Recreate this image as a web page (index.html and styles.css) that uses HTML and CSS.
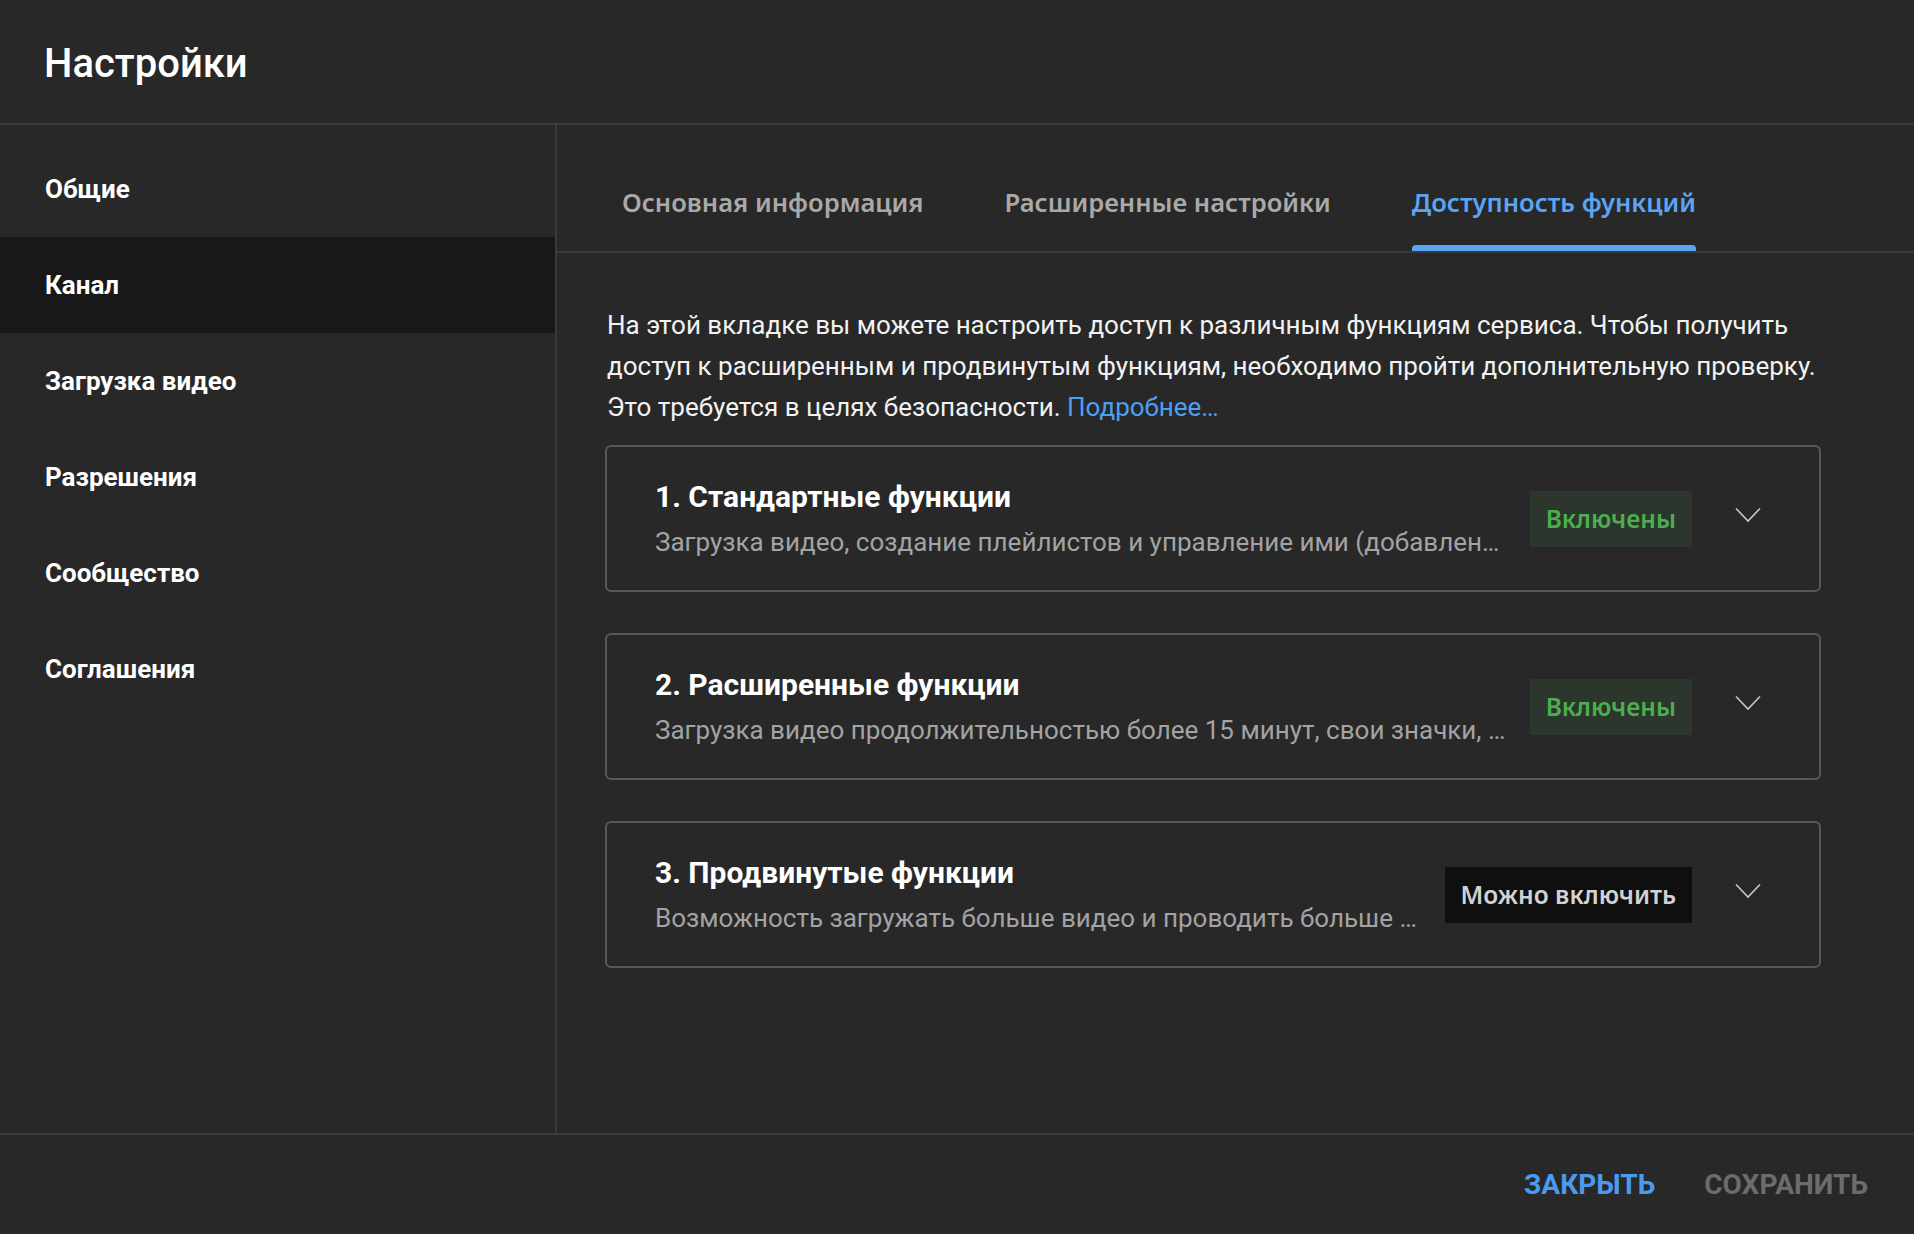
FILE: index.html
```html
<!DOCTYPE html>
<html lang="ru">
<head>
<meta charset="utf-8">
<title>Настройки</title>
<link rel="stylesheet" href="styles.css">
</head>
<body>
<div class="dialog">
  <header class="header">
    <h1 class="title">Настройки</h1>
  </header>
  <div class="main">
    <nav class="sidebar">
      <div class="nav-item">Общие</div>
      <div class="nav-item active">Канал</div>
      <div class="nav-item">Загрузка видео</div>
      <div class="nav-item">Разрешения</div>
      <div class="nav-item">Сообщество</div>
      <div class="nav-item">Соглашения</div>
    </nav>
    <section class="content">
      <div class="tabs">
        <div class="tab"><span class="tab-label">Основная информация</span><span class="tab-line"></span></div>
        <div class="tab"><span class="tab-label">Расширенные настройки</span><span class="tab-line"></span></div>
        <div class="tab selected"><span class="tab-label">Доступность функций</span><span class="tab-line"></span></div>
      </div>
      <div class="panel">
        <p class="desc">На этой вкладке вы можете настроить доступ к различным функциям сервиса. Чтобы получить<br>доступ к расширенным и продвинутым функциям, необходимо пройти дополнительную проверку.<br>Это требуется в целях безопасности. <a class="link" href="#">Подробнее…</a></p>

        <div class="card">
          <div class="card-text">
            <div class="card-title">1. Стандартные функции</div>
            <div class="card-sub">Загрузка видео, создание плейлистов и управление ими (добавлен…</div>
          </div>
          <div class="badge on">Включены</div>
          <svg class="chev" width="26" height="16" viewBox="0 0 26 16"><path d="M1 1.5 L13 14 L25 1.5" fill="none" stroke="#c8c8c8" stroke-width="1.6"/></svg>
        </div>

        <div class="card">
          <div class="card-text">
            <div class="card-title">2. Расширенные функции</div>
            <div class="card-sub">Загрузка видео продолжительностью более 15 минут, свои значки, …</div>
          </div>
          <div class="badge on">Включены</div>
          <svg class="chev" width="26" height="16" viewBox="0 0 26 16"><path d="M1 1.5 L13 14 L25 1.5" fill="none" stroke="#c8c8c8" stroke-width="1.6"/></svg>
        </div>

        <div class="card">
          <div class="card-text">
            <div class="card-title">3. Продвинутые функции</div>
            <div class="card-sub">Возможность загружать больше видео и проводить больше …</div>
          </div>
          <div class="badge off">Можно включить</div>
          <svg class="chev" width="26" height="16" viewBox="0 0 26 16"><path d="M1 1.5 L13 14 L25 1.5" fill="none" stroke="#c8c8c8" stroke-width="1.6"/></svg>
        </div>
      </div>
    </section>
  </div>
  <footer class="footer">
    <button class="btn primary">ЗАКРЫТЬ</button>
    <button class="btn muted">СОХРАНИТЬ</button>
  </footer>
</div>
</body>
</html>
```
FILE: styles.css
```css
* { box-sizing: border-box; }
html, body {
  margin: 0;
  padding: 0;
  background: #282828;
  font-family: Roboto, "Noto Sans", "Liberation Sans", sans-serif;
  color: #fff;
}
.dialog {
  width: 1914px;
  height: 1234px;
  display: flex;
  flex-direction: column;
  background: #282828;
}
.header {
  height: 125px;
  flex: none;
  border-bottom: 2px solid #3a3a3a;
  display: flex;
  align-items: center;
  padding: 4px 0 0 44px;
}
.title {
  margin: 0;
  font-size: 40px;
  font-weight: 500;
  line-height: 48px;
  color: #fff;
}
.main {
  height: 1008px;
  flex: none;
  display: flex;
}
.sidebar {
  width: 557px;
  flex: none;
  border-right: 2px solid #3a3a3a;
  padding-top: 16px;
}
.nav-item {
  height: 96px;
  display: flex;
  align-items: center;
  padding-left: 45px;
  font-size: 26px;
  font-weight: 700;
  color: #fff;
}
.nav-item.active {
  background: #181818;
}
.content {
  flex: 1;
  display: flex;
  flex-direction: column;
}
.tabs {
  height: 128px;
  flex: none;
  display: flex;
  gap: 81px;
  padding-left: 65px;
  border-bottom: 2px solid #3a3a3a;
}
.tab {
  display: flex;
  flex-direction: column;
  height: 126px;
}
.tab-label {
  padding-top: 61px;
  line-height: 34px;
  font-family: "Noto Sans", "Open Sans", sans-serif;
  font-size: 25.6px;
  font-weight: 600;
  color: #a9a9a9;
  white-space: nowrap;
}
.tab-line {
  margin-top: auto;
  height: 6px;
  border-radius: 4px 4px 0 0;
}
.tab.selected .tab-label { color: #5ba4f4; }
.tab.selected .tab-line { background: #5ba4f4; }
.panel {
  padding: 52px 93px 0 48px;
}
.desc {
  margin: 0 0 17px 2px;
  font-size: 26px;
  line-height: 41px;
  color: #f2f2f2;
  white-space: nowrap;
}
.link {
  color: #4ca0f4;
  text-decoration: none;
}
.card {
  height: 147px;
  border: 2px solid #585858;
  border-radius: 6px;
  display: flex;
  align-items: center;
  padding: 0 58px 0 48px;
  margin-bottom: 41px;
}
.card-text {
  flex: 1;
  min-width: 0;
  margin-right: 24px;
}
.card-title {
  font-size: 30px;
  font-weight: 700;
  line-height: 36px;
  color: #fff;
}
.card-sub {
  margin-top: 11px;
  font-size: 26px;
  line-height: 32px;
  color: #a3a3a3;
  white-space: nowrap;
  overflow: hidden;
  text-overflow: ellipsis;
}
.badge {
  flex: none;
  height: 56px;
  line-height: 56px;
  padding: 0 16px;
  font-family: "Noto Sans", "Open Sans", sans-serif;
  font-size: 24.5px;
  font-weight: 600;
  white-space: nowrap;
}
.badge.on {
  background: #2c362c;
  color: #4dae4f;
}
.badge.off {
  background: #0f0f0f;
  color: #d2d2d2;
}
.chev {
  flex: none;
  margin-left: 43px;
  margin-bottom: 8px;
  display: block;
}
.footer {
  flex: 1;
  border-top: 2px solid #3a3a3a;
  display: flex;
  justify-content: flex-end;
  align-items: center;
  gap: 49px;
  padding-right: 46px;
}
.btn {
  background: none;
  border: 0;
  padding: 0;
  font-family: Roboto, "Liberation Sans", sans-serif;
  font-size: 28px;
  font-weight: 700;
  line-height: 34px;
  cursor: pointer;
}
.btn.primary { color: #4a9bf0; }
.btn.muted { color: #6c6c6c; }
```
